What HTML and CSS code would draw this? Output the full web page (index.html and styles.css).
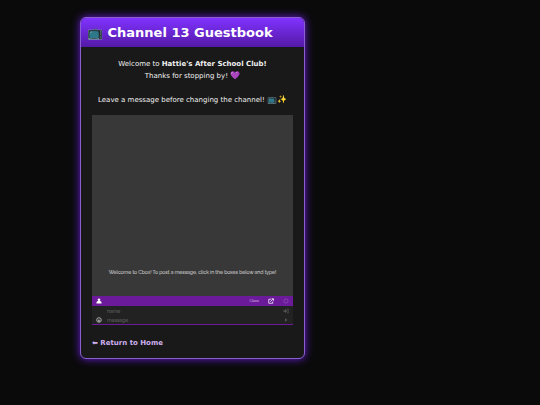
FILE: index.html
```html
<!DOCTYPE html>
<html lang="en">
<head>
  <meta charset="UTF-8">
  <title>Channel 13 Guestbook</title>
  <link rel="stylesheet" href="styles.css">
</head>
<body>
<div class="window">
  <h1 class="title-bar">📺 Channel 13 Guestbook</h1>

  <div class="content">
    <p class="intro">
      Welcome to <b>Hattie's After School Club!</b><br>
      Thanks for stopping by! <span class="emoji">💜</span><br>
      <br>
      Leave a message before changing the channel! <span class="emoji">📺✨</span>
    </p>

    <div class="cbox">
      <div class="messages">
        <p>Welcome to Cbox! To post a message, click in the boxes below and type!</p>
      </div>

      <div class="toolbar">
        <button type="button" class="icon-button profile" aria-label="Profile">
          <svg viewBox="0 0 12 12"><circle cx="6" cy="3.5" r="2.7"/><path d="M1 11V9q0-3 3-3h4q3 0 3 3v2z"/></svg>
        </button>
        <a href="#" class="brand">Cbox</a>
        <button type="button" class="icon-button" aria-label="Open in new window">
          <svg viewBox="0 0 12 12"><path d="M6 2.5H1.5v8h8V7M4.5 7.5L10 2M7 1.5h4v4" fill="none" stroke="currentColor" stroke-width="1.5"/></svg>
        </button>
        <button type="button" class="icon-button refresh" aria-label="Refresh">
          <svg viewBox="0 0 12 12"><circle cx="6" cy="6" r="4.2" fill="none" stroke="currentColor" stroke-width="1.6"/></svg>
        </button>
      </div>

      <form class="post-form">
        <div class="row">
          <span></span>
          <input type="text" name="name" placeholder="name" aria-label="name">
          <button type="button" class="icon-button" aria-label="Sign in">
            <svg viewBox="0 0 12 12"><path d="M1 4.5h3v-3L8.5 6 4 10.5v-3H1zM8 1.5h3v9H8V9h1.5V3H8z"/></svg>
          </button>
        </div>
        <div class="row">
          <button type="button" class="icon-button smilies" aria-label="Smilies">
            <svg viewBox="0 0 12 12"><circle cx="6" cy="6" r="4.7" fill="none" stroke="currentColor" stroke-width="1.6"/><path d="M3 6.5h6q-.5 3-3 3t-3-3zM3.5 3.5H5V5H3.5zM7 3.5h1.5V5H7z"/></svg>
          </button>
          <input type="text" name="message" placeholder="message" aria-label="message">
          <button type="submit" class="icon-button" aria-label="Send">
            <svg viewBox="0 0 12 12"><path d="M4 2.5L9 6 4 9.5z"/></svg>
          </button>
        </div>
      </form>
    </div>

    <a href="index.html" class="home-link">⬅ Return to Home</a>
  </div>
</div>
</body>
</html>
```

FILE: styles.css
```css
* {
  box-sizing: border-box;
}
body {
  margin: 0;
  padding: 17px 80px;
  background: #0a0a0a;
  color: #f0f0f0;
  font-family: Verdana, "DejaVu Sans", sans-serif;
  font-size: 7px;
  line-height: 12px;
}
.window {
  max-width: 225px;
  background: #191919;
  border: 1px solid #8b5fd0;
  border-radius: 6px;
  box-shadow: 0 0 8px #6a20e0;
  overflow: hidden;
}
.title-bar {
  margin: 0;
  padding: 6px;
  background: linear-gradient(#8033ff, #5419a6);
  color: #fff;
  font-size: 13px;
  line-height: 17px;
  white-space: nowrap;
}
.content {
  padding: 11px 11px 9px;
}
.intro {
  margin: 0 0 9px;
  text-align: center;
  white-space: nowrap;
}
.emoji {
  font-size: 8px;
  line-height: 8px;
}

/* chat box */
.cbox {
  border-bottom: 1px solid #6b1b9a;
  background: #222;
  font-family: Raleway, Inter, sans-serif;
  font-size: 5px;
}
.messages {
  display: flex;
  flex-direction: column;
  justify-content: flex-end;
  height: 181px;
  padding-bottom: 18px;
  background: #383838;
  text-align: center;
}
.messages p {
  margin: 0;
}
.toolbar {
  display: flex;
  align-items: center;
  gap: 9px;
  height: 10px;
  padding: 0 4px;
  background: #6b1b9a;
}
.brand {
  color: #e0cdea;
  font-size: 4px;
  text-decoration: none;
}
.icon-button {
  display: block;
  width: 6px;
  height: 6px;
  padding: 0;
  border: 0;
  background: none;
  color: #555;
}
.icon-button svg {
  display: block;
  width: 100%;
  height: 100%;
  fill: currentColor;
}
.toolbar .icon-button {
  color: #fff;
}
.toolbar .profile {
  margin-right: auto;
}
.toolbar .refresh {
  color: #8d4bb5;
}
.row .smilies {
  color: #bbb;
}
.row {
  display: grid;
  grid-template-columns: 6px 1fr 6px;
  align-items: center;
  column-gap: 5px;
  height: 9px;
  padding: 0 4px;
}
.row input {
  width: 100%;
  height: 9px;
  padding: 0;
  border: 0;
  outline: 0;
  background: none;
  color: #ddd;
  font: inherit;
}
.row input::placeholder {
  color: #777;
}
.home-link {
  display: block;
  margin-top: 12px;
  color: #cfb0f0;
  font-weight: bold;
  text-decoration: none;
}
```
